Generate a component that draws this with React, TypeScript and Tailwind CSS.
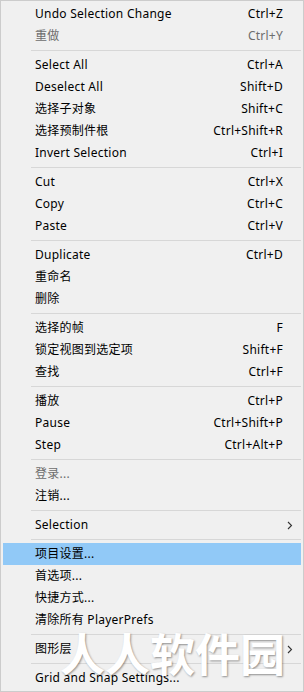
import React from "react";

type Item = {
  label: string;
  shortcut?: string;
  disabled?: boolean;
  active?: boolean;
  submenu?: boolean;
};

const groups: Item[][] = [
  [
    { label: "Undo Selection Change", shortcut: "Ctrl+Z" },
    { label: "重做", shortcut: "Ctrl+Y", disabled: true },
  ],
  [
    { label: "Select All", shortcut: "Ctrl+A" },
    { label: "Deselect All", shortcut: "Shift+D" },
    { label: "选择子对象", shortcut: "Shift+C" },
    { label: "选择预制件根", shortcut: "Ctrl+Shift+R" },
    { label: "Invert Selection", shortcut: "Ctrl+I" },
  ],
  [
    { label: "Cut", shortcut: "Ctrl+X" },
    { label: "Copy", shortcut: "Ctrl+C" },
    { label: "Paste", shortcut: "Ctrl+V" },
  ],
  [
    { label: "Duplicate", shortcut: "Ctrl+D" },
    { label: "重命名" },
    { label: "删除" },
  ],
  [
    { label: "选择的帧", shortcut: "F" },
    { label: "锁定视图到选定项", shortcut: "Shift+F" },
    { label: "查找", shortcut: "Ctrl+F" },
  ],
  [
    { label: "播放", shortcut: "Ctrl+P" },
    { label: "Pause", shortcut: "Ctrl+Shift+P" },
    { label: "Step", shortcut: "Ctrl+Alt+P" },
  ],
  [
    { label: "登录...", disabled: true },
    { label: "注销..." },
  ],
  [{ label: "Selection", submenu: true }],
  [
    { label: "项目设置...", active: true },
    { label: "首选项..." },
    { label: "快捷方式..." },
    { label: "清除所有 PlayerPrefs" },
  ],
  [{ label: "图形层", submenu: true }],
  [{ label: "Grid and Snap Settings..." }],
];

const Chevron = () => (
  <svg width="6" height="9" viewBox="0 0 6 9" className="text-[#333]">
    <path d="M1 1 L4.5 4.5 L1 8" fill="none" stroke="currentColor" strokeWidth="1.1" />
  </svg>
);

const Row = ({ item }: { item: Item }) => (
  <div
    className={`flex h-[22px] items-center justify-between pl-[32px] pr-[18px] ${
      item.active ? "bg-[#91c9f7]" : ""
    } ${item.disabled ? "text-[#6d6d6d]" : "text-black"}`}
  >
    <span>{item.label}</span>
    {item.shortcut && <span>{item.shortcut}</span>}
    {item.submenu && (
      <span className="-mr-[10px]">
        <Chevron />
      </span>
    )}
  </div>
);

export default function App() {
  return (
    <div className="relative h-[692px] w-[304px] overflow-hidden">
      <div
        className="flex h-full w-full flex-col border border-[#cccccc] bg-[#f0f0f0] p-[2px] text-[12px] leading-none tracking-[0.25px]"
        style={{ fontFamily: '"Noto Sans", "Noto Sans CJK SC", sans-serif' }}
      >
        {groups.map((group, gi) => (
          <div key={gi}>
            {gi > 0 && (
              <div className="flex h-[7px] items-center">
                <div className="ml-[28px] h-px flex-1 bg-[#d7d7d7]" />
              </div>
            )}
            {group.map((item) => (
              <Row key={item.label} item={item} />
            ))}
          </div>
        ))}
      </div>
      <div
        className="pointer-events-none absolute left-[60px] top-[630px] text-[45px] font-bold leading-none text-white [text-shadow:1px_1px_2px_rgba(0,0,0,0.4)]"
        style={{ fontFamily: '"Noto Sans CJK SC", sans-serif' }}
      >
        人人软件园
      </div>
    </div>
  );
}
